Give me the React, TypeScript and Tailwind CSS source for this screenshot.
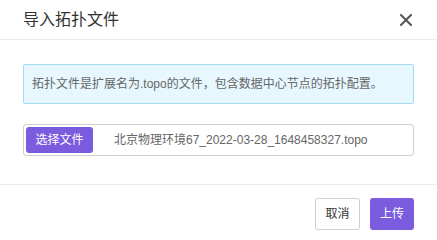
export default function App() {
  const font = { fontFamily: '"Liberation Sans", "Noto Sans CJK SC", sans-serif' };
  return (
    <div className="w-[437px] h-[240px] bg-white text-[#333] overflow-hidden" style={font}>
      {/* Header */}
      <div className="h-[40px] border-b border-[#e9ecef] flex items-center justify-between pl-[23px] pr-[25px]">
        <span className="text-[16px] text-[#333]">导入拓扑文件</span>
        <svg width="12" height="12" viewBox="0 0 12 12" className="mt-[1px]">
          <path d="M1 1 L11 11 M11 1 L1 11" stroke="#555" strokeWidth="2" strokeLinecap="square" />
        </svg>
      </div>

      {/* Body */}
      <div className="px-[23px] pt-[24px] pb-[28px] flex flex-col gap-[20px]">
        <div className="h-[40px] bg-[#e6f7fe] border border-[#a3dcf7] rounded-[2px] flex items-center px-[8px] text-[12px] text-[#666]">
          拓扑文件是扩展名为.topo的文件，包含数据中心节点的拓扑配置。
        </div>
        <div className="h-[32px] border border-[#d0d0d0] rounded-[3px] flex items-center pl-[2px]">
          <div className="h-[26px] w-[67px] bg-[#7b5cdf] rounded-[3px] text-white text-[12px] flex items-center justify-center">
            选择文件
          </div>
          <span className="ml-[21px] text-[12px] text-[#666]">北京物理环境67_2022-03-28_1648458327.topo</span>
        </div>
      </div>

      {/* Footer */}
      <div className="border-t border-[#e9ecef] pt-[13px] pr-[23px] flex justify-end gap-[10px]">
        <button className="h-[32px] w-[45px] border border-[#d0d0d0] rounded-[3px] bg-white text-[12px] text-[#333]">
          取消
        </button>
        <button className="h-[32px] w-[44px] rounded-[3px] bg-[#7b5cdf] text-white text-[12px]">
          上传
        </button>
      </div>
    </div>
  );
}
